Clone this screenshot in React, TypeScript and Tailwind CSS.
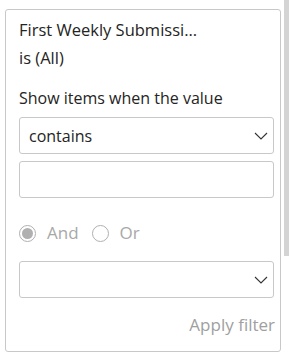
import { useState } from "react";

function Chevron() {
  return (
    <svg width="14" height="8" viewBox="0 0 14 8" fill="none" className="shrink-0">
      <path d="M1 1l6 6 6-6" stroke="#333" strokeWidth="1.1" />
    </svg>
  );
}

function Radio({ checked, label }: { checked?: boolean; label: string }) {
  return (
    <label className="flex items-center gap-[11px]">
      <span className="w-[17px] h-[17px] rounded-full border border-[#b0b0b0] flex items-center justify-center">
        {checked && <span className="w-[11px] h-[11px] rounded-full bg-[#b0b0b0]" />}
      </span>
      <span>{label}</span>
    </label>
  );
}

export default function App() {
  const [text, setText] = useState("");

  return (
    <div className="w-[289px] h-[356px] bg-white flex font-['Open_Sans',sans-serif] text-[#252423]">
      <div className="pl-[5px] pt-[9px] pb-[5px]">
        <div className="w-[276px] h-[343px] border border-[#c8c8c8] rounded-[3px] pl-[13px] pr-[6px] pt-[6px] flex flex-col">
          <div className="text-[16.5px] leading-[28px]">First Weekly Submissi...</div>
          <div className="text-[16.5px] leading-[28px]">is (All)</div>
          <div className="text-[16px] leading-[28px] mt-[12px]">Show items when the value</div>
          <div className="mt-[5px] h-[37px] border border-[#c8c8c8] rounded-[3px] flex items-center justify-between pl-[9px] pr-[5px] text-[16px]">
            <span>contains</span>
            <Chevron />
          </div>
          <input
            value={text}
            onChange={(e) => setText(e.target.value)}
            className="mt-[7px] h-[37px] border border-[#c8c8c8] rounded-[3px] outline-none px-[9px] text-[16px]"
          />
          <div className="mt-[23px] flex items-center gap-[13px] text-[17px] leading-[24px] text-[#a8a8a8]">
            <Radio checked label="And" />
            <Radio label="Or" />
          </div>
          <div className="mt-[16px] h-[37px] border border-[#c8c8c8] rounded-[3px] flex items-center justify-end pr-[5px]">
            <Chevron />
          </div>
          <div className="mt-[15px] -mr-[1px] text-right text-[17px] leading-[24px] text-[#a0a0a0]">Apply filter</div>
        </div>
      </div>
      <div className="ml-auto w-[5px] h-[256px] bg-[#d4d4d4]" />
    </div>
  );
}
